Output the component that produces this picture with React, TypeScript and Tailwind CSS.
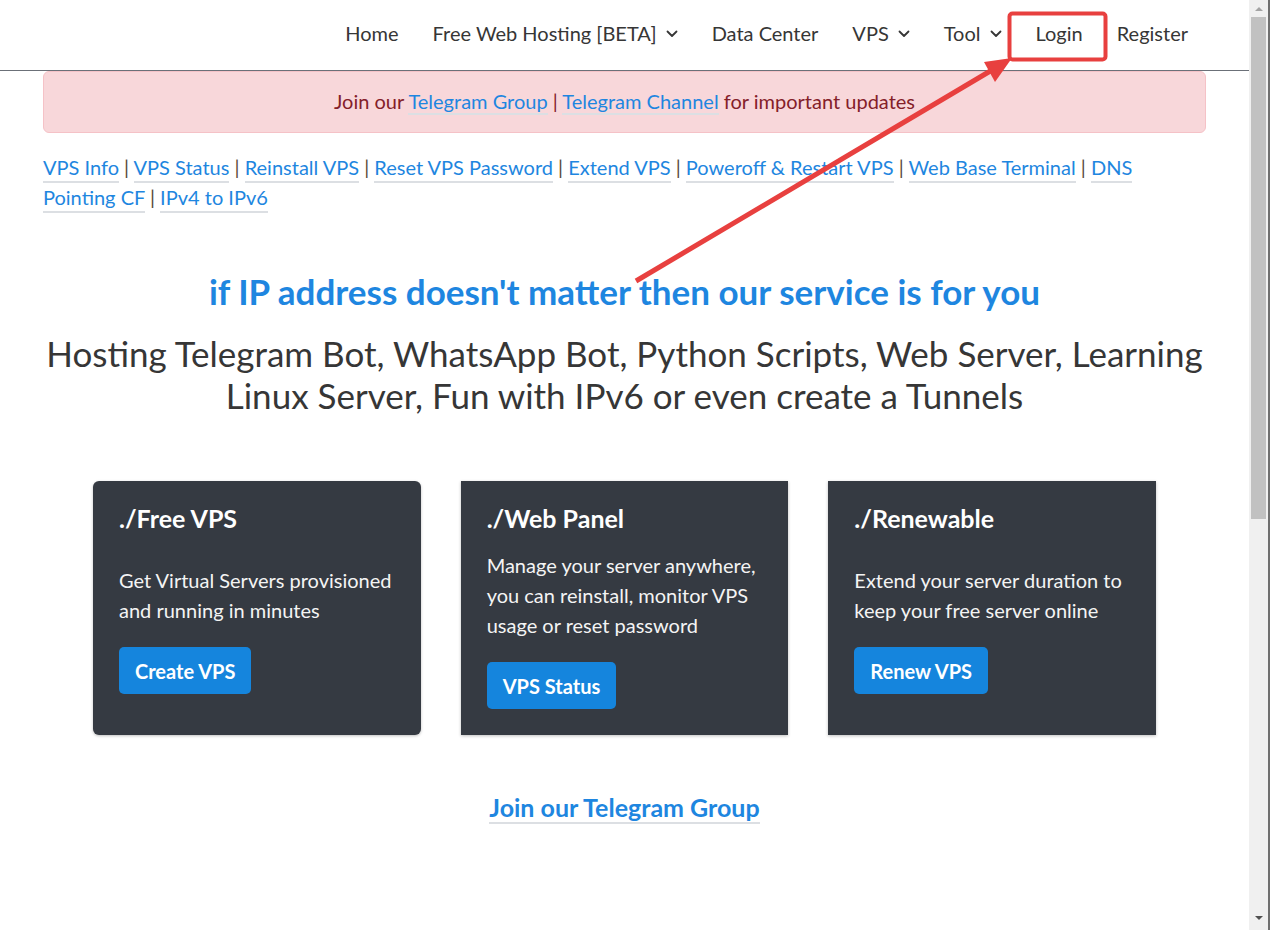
const navItems = [
  { label: "Home" },
  { label: "Free Web Hosting [BETA]", dropdown: true },
  { label: "Data Center" },
  { label: "VPS", dropdown: true },
  { label: "Tool", dropdown: true },
  { label: "Login" },
  { label: "Register" },
];

const quickLinks = [
  "VPS Info",
  "VPS Status",
  "Reinstall VPS",
  "Reset VPS Password",
  "Extend VPS",
  "Poweroff & Restart VPS",
  "Web Base Terminal",
  "DNS Pointing CF",
  "IPv4 to IPv6",
];

const cards = [
  {
    title: "./Free VPS",
    text: "Get Virtual Servers provisioned and running in minutes",
    button: "Create VPS",
    rounded: true,
  },
  {
    title: "./Web Panel",
    text: "Manage your server anywhere, you can reinstall, monitor VPS usage or reset password",
    button: "VPS Status",
    rounded: false,
  },
  {
    title: "./Renewable",
    text: "Extend your server duration to keep your free server online",
    button: "Renew VPS",
    rounded: false,
  },
];

function Chevron() {
  return (
    <svg width="12" height="8" viewBox="0 0 12 8" className="mt-[2px]">
      <polyline points="1.5,1.5 6,6 10.5,1.5" fill="none" stroke="currentColor" strokeWidth="1.8" strokeLinecap="round" strokeLinejoin="round" />
    </svg>
  );
}

function Scrollbar() {
  return (
    <div className="flex w-[21px] shrink-0">
      <div className="flex w-[19px] flex-col bg-[#f0f0f0]">
        <div className="flex h-[17px] items-center justify-center">
          <div className="h-0 w-0 border-x-[4px] border-b-[4px] border-x-transparent border-b-[#a3a3a3]" />
        </div>
        <div className="mx-[2px] h-[502px] bg-[#c1c1c1]" />
        <div className="flex-1" />
        <div className="flex h-[24px] items-center justify-center">
          <div className="h-0 w-0 border-x-[4px] border-t-[4px] border-x-transparent border-t-[#505050]" />
        </div>
      </div>
      <div className="w-[2px] bg-[#6f6f6f]" />
    </div>
  );
}

export default function App() {
  return (
    <div className="relative flex h-[930px] w-[1270px] overflow-hidden bg-white font-['Lato','Noto_Sans',sans-serif]">
      <div className="flex min-w-0 flex-1 flex-col">
        {/* navbar */}
        <nav className="flex h-[71px] shrink-0 items-center justify-end gap-[34px] border-b border-[#6b7078] pr-[61px] text-[20px] text-[#363636]">
          {navItems.map((item) => (
            <a key={item.label} className="flex items-center gap-[9px] pb-[4px]">
              <span>{item.label}</span>
              {item.dropdown && <Chevron />}
            </a>
          ))}
        </nav>

        <div className="px-[43px]">
          {/* notice */}
          <div className="flex h-[62px] items-center justify-center rounded-[6px] border border-[#f5c2c7] bg-[#f8d7da] pb-[2px] text-[20px] text-[#842029]">
            <p>
              Join our{" "}
              <a className="border-b-2 border-[#dcdfe3] text-[#1e86e0]">Telegram Group</a> |{" "}
              <a className="border-b-2 border-[#dcdfe3] text-[#1e86e0]">Telegram Channel</a> for important updates
            </p>
          </div>

          {/* quick links */}
          <p className="mt-[19px] text-[20px] leading-[30px] text-[#5a4a3a]">
            {quickLinks.map((l, i) => (
              <span key={l}>
                <a className="border-b-2 border-[#dcdfe3] pb-[2px] text-[#1e86e0]">{l}</a>
                {i < quickLinks.length - 1 && " | "}
              </span>
            ))}
          </p>
        </div>

        <h2 className="mt-[59px] text-center text-[35px] font-bold leading-[40px] text-[#1e86e0]">
          if IP address doesn't matter then our service is for you
        </h2>
        <p className="mx-auto mt-[21px] w-[1190px] text-center text-[35px] leading-[42px] text-[#363636]">
          Hosting Telegram Bot, WhatsApp Bot, Python Scripts, Web Server, Learning Linux Server, Fun with IPv6 or even create a Tunnels
        </p>

        {/* features */}
        <div className="mx-auto mt-[65px] grid w-[1063px] grid-cols-3 gap-[40px]">
          {cards.map((c) => (
            <div
              key={c.title}
              className={`flex h-[254px] flex-col bg-[#353a42] px-[26px] pb-[26px] pt-[22px] text-[#f4f4f4] shadow-[0_1px_3px_rgba(0,0,0,0.25)] ${
                c.rounded ? "rounded-[6px]" : ""
              }`}
            >
              <h3 className="text-[25px] font-bold leading-[30px] text-white">{c.title}</h3>
              <div className="mt-[17px] flex flex-1 flex-col justify-center">
                <p className="text-[20px] leading-[30px]">{c.text}</p>
                <div className="mt-[22px]">
                  <button className="h-[47px] rounded-[5px] bg-[#1585dd] px-[16px] text-[20px] font-bold text-white">
                    {c.button}
                  </button>
                </div>
              </div>
            </div>
          ))}
        </div>

        <div className="mt-[57px] text-center">
          <a className="border-b-2 border-[#dcdfe3] text-[25px] font-bold leading-[30px] text-[#1e86e0]">
            Join our Telegram Group
          </a>
        </div>
      </div>

      <Scrollbar />

      {/* annotation overlay */}
      <svg className="pointer-events-none absolute left-0 top-0" width="1270" height="930">
        <rect x="1009.5" y="13.5" width="96" height="46" rx="3" fill="none" stroke="#e8403f" strokeWidth="4" />
        <line x1="636" y1="281" x2="992" y2="70" stroke="#e8403f" strokeWidth="5" />
        <polygon points="1012,58 984,62 995,82" fill="#e8403f" />
      </svg>
    </div>
  );
}
